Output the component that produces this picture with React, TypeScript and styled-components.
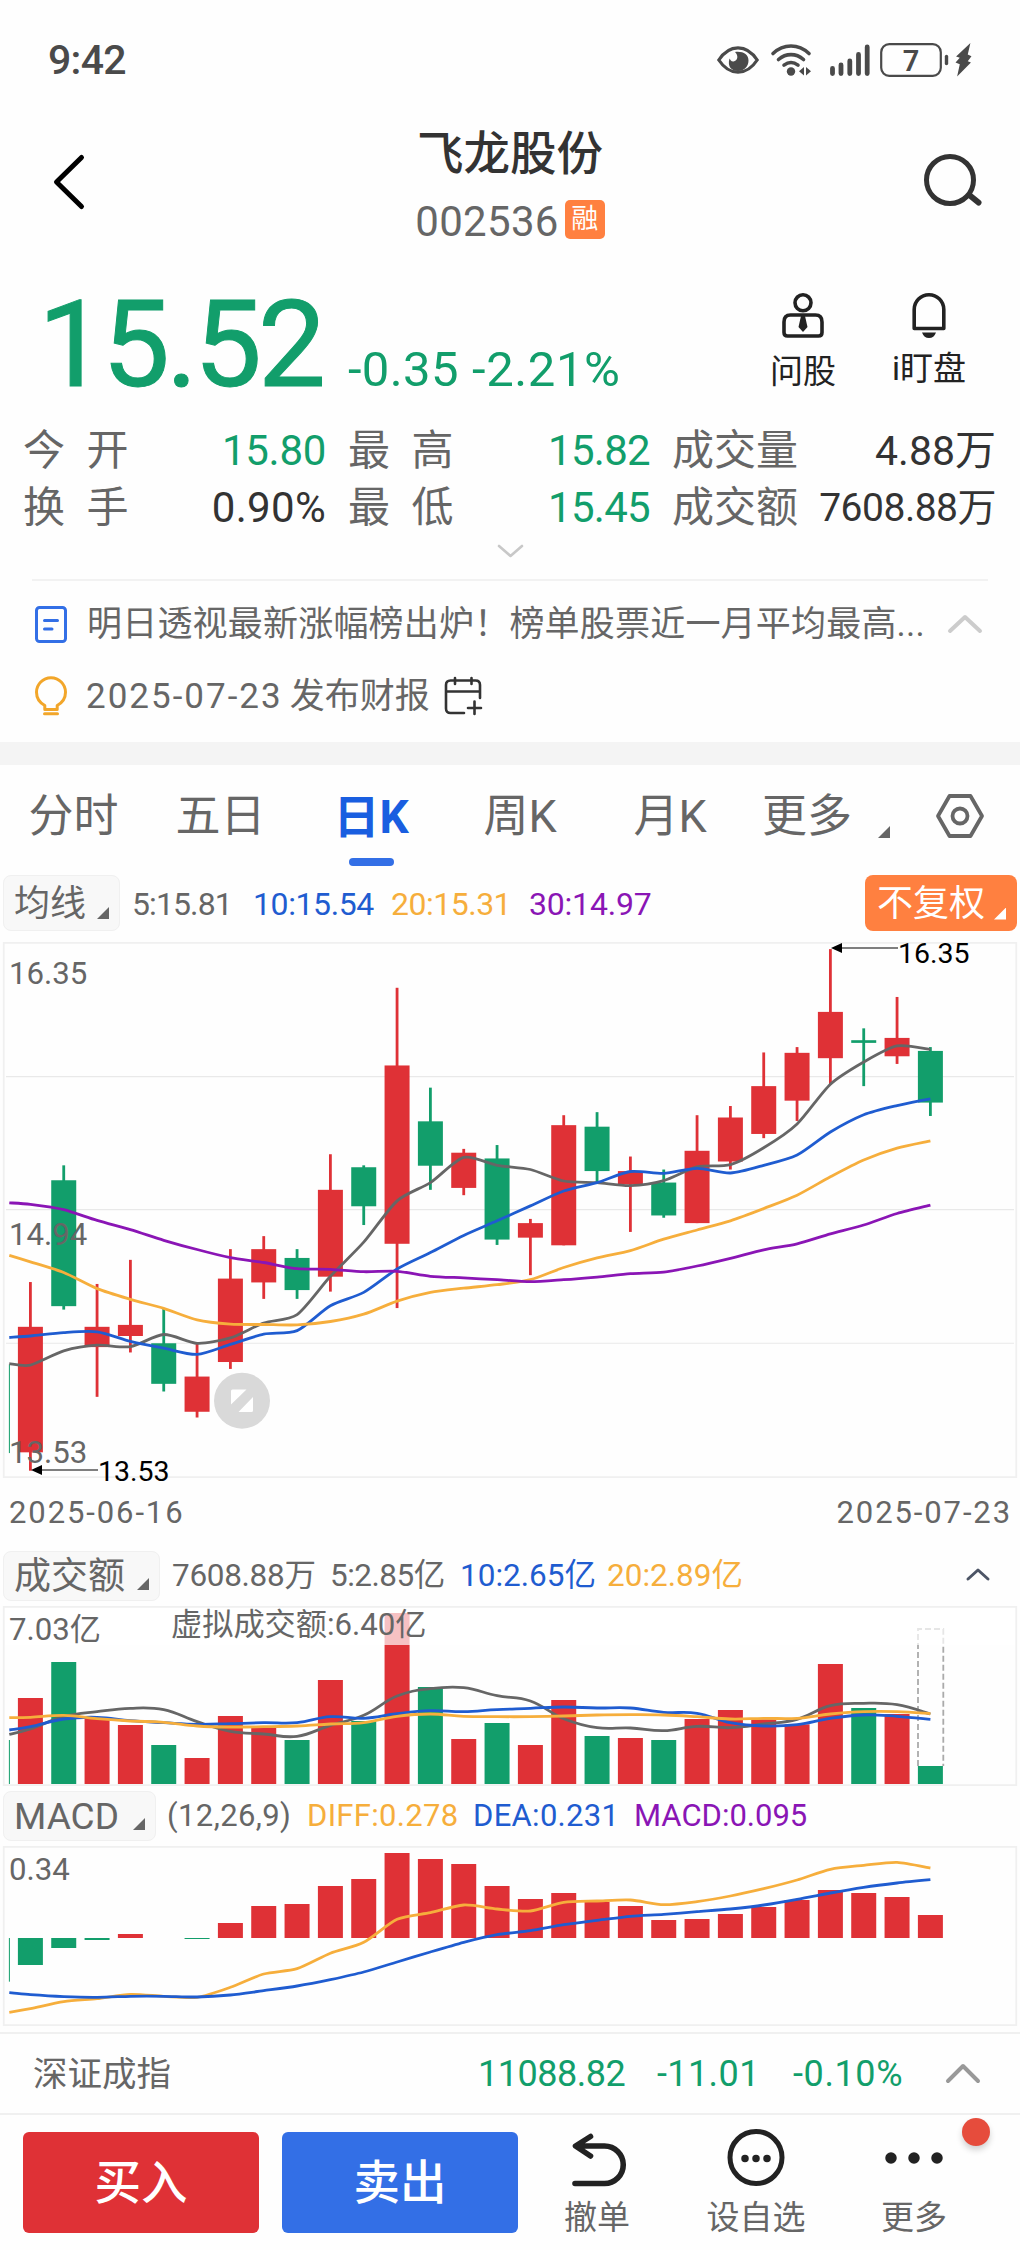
import React from 'react';
import styled, { createGlobalStyle } from 'styled-components';

const C = {
  red: '#df3136',
  green: '#129e6b',
  blue: '#1f5cd0',
  brand: '#336fe6',
  amber: '#f6ae3c',
  purple: '#8a15b5',
  gray: '#666666',
  ink: '#333333',
  orange: '#ff8040',
  line: '#f0f0f0',
};

const GlobalStyle = createGlobalStyle`
  * { box-sizing: border-box; }
  html, body { margin: 0; padding: 0; background: #fefefe; }
  body { font-family: Roboto, "Noto Sans CJK SC", sans-serif; color: ${C.gray}; }
  svg { display: block; flex: none; overflow: visible; }
`;

const Screen = styled.div`
  width: 1020px;
  height: 2250px;
  overflow: hidden;
  display: flex;
  flex-direction: column;
  background: #fefefe;
`;

const Label = styled.span<{ $size: number; $color?: string; $ls?: number; $weight?: number; $w?: number; $ml?: number; $ws?: number }>`
  font-size: ${(p) => p.$size}px;
  color: ${(p) => p.$color ?? C.gray};
  letter-spacing: ${(p) => p.$ls ?? 0}px;
  word-spacing: ${(p) => p.$ws ?? 0}px;
  font-weight: ${(p) => p.$weight ?? 400};
  width: ${(p) => (p.$w ? `${p.$w}px` : 'auto')};
  margin-left: ${(p) => p.$ml ?? 0}px;
  padding-top: 2px;
  line-height: 1.2;
  white-space: pre;
  flex: none;
`;

const StatusBar = styled.div`
  height: 120px;
  flex: none;
  display: flex;
  align-items: center;
  justify-content: space-between;
  padding: 0 48px 0 48px;
`;
const StatusIcons = styled.div`
  display: grid;
  grid-template-columns: 42px 40px 38px 69px 18px;
  column-gap: 12px;
  align-items: center;
  & > :nth-child(3) { margin-left: 7px; }
  & > :nth-child(4) { margin-left: 7px; }
  & > :nth-child(5) { margin-left: 1px; }
`;

const Header = styled.header`
  height: 123px;
  flex: none;
  display: grid;
  grid-template-columns: 120px 1fr 120px;
  align-items: center;
`;
const HeaderSide = styled.div<{ $left: number }>`
  padding-left: ${(p) => p.$left}px;
`;
const TitleBlock = styled.div`
  display: flex;
  flex-direction: column;
  align-items: center;
  gap: 17px;
  padding-top: 3px;
`;
const Title = styled.h1`
  margin: 0;
  font-size: 46.5px;
  line-height: 60px;
  font-weight: 500;
  color: ${C.ink};
`;
const CodeLine = styled.div`
  display: flex;
  height: 42px;
  align-items: center;
  gap: 6px;
`;
const MarginBadge = styled.span`
  width: 40px;
  height: 39px;
  margin-top: -4px;
  border-radius: 5px;
  background: ${C.orange};
  color: #fff;
  font-size: 27px;
  line-height: 38px;
  text-align: center;
`;

const QuoteRow = styled.section`
  height: 172px;
  flex: none;
  padding: 42px 51px 0 38px;
  display: flex;
  justify-content: space-between;
`;
const PriceGroup = styled.div`
  display: flex;
  align-items: baseline;
  height: 120px;
`;
const Price = styled.strong`
  font-size: 121px;
  line-height: 120px;
  letter-spacing: -4px;
  font-weight: 400;
  -webkit-text-stroke: 1px ${C.green};
  color: ${C.green};
`;
const QuickActions = styled.div`
  display: flex;
  gap: 46px;
  padding-top: 8px;
`;
const QuickAction = styled.div<{ $gap: number }>`
  width: 80px;
  display: flex;
  flex-direction: column;
  align-items: center;
  gap: ${(p) => p.$gap}px;
`;

const StatsGrid = styled.section`
  flex: none;
  display: grid;
  grid-template-columns: 303px 302px 324px;
  column-gap: 22px;
  grid-auto-rows: 57px;
  padding: 7px 0 0 23px;
`;
const Stat = styled.div`
  display: flex;
  align-items: center;
  justify-content: space-between;
`;
const Expand = styled.div`
  height: 43px;
  flex: none;
  display: flex;
  justify-content: center;
  padding-top: 9px;
`;
const NewsPanel = styled.section`
  flex: none;
  height: 163px;
  margin: 0 32px;
  padding-top: 7px;
  border-top: 2px solid #f2f2f2;
`;
const NewsRow = styled.div`
  height: 72px;
  padding-left: 3px;
  display: flex;
  align-items: center;
`;
const Band = styled.div`
  height: 23px;
  flex: none;
  background: #f4f4f4;
`;

const Tabs = styled.nav`
  height: 101px;
  flex: none;
  display: grid;
  grid-template-columns: 147px 147px 158px 136px 164px 151px 114px;
`;
const Tab = styled.div<{ $active?: boolean }>`
  display: flex;
  flex-direction: column;
  align-items: center;
  padding: 23px ${(p) => (p.$active ? 4 : 0)}px 0 0;
  font-size: ${(p) => (p.$active ? 46 : 45)}px;
  line-height: 58px;
  font-weight: ${(p) => (p.$active ? 700 : 400)};
  color: ${(p) => (p.$active ? '#195ee0' : C.gray)};
  &::after {
    content: '';
    display: ${(p) => (p.$active ? 'block' : 'none')};
    width: 45px;
    height: 8px;
    border-radius: 4px;
    margin-top: 12px;
    background: ${C.brand};
  }
`;
const MoreTab = styled.div`
  display: flex;
  align-items: flex-start;
  padding: 23px 13px 0 10px;
  justify-content: space-between;
  font-size: 45px;
  line-height: 58px;
`;
const SettingsTab = styled.div`
  display: flex;
  justify-content: center;
  padding-top: 29px;
`;

const InfoRow = styled.div<{ $h: number; $top: number }>`
  height: ${(p) => p.$h}px;
  flex: none;
  display: flex;
  align-items: flex-start;
  padding: ${(p) => p.$top}px 3px 0;
`;
const Chip = styled.div<{ $w: number; $h: number; $hot?: boolean }>`
  width: ${(p) => p.$w}px;
  height: ${(p) => p.$h}px;
  flex: none;
  display: flex;
  align-items: center;
  justify-content: space-between;
  padding: ${(p) => (p.$hot ? 2 : 1)}px ${(p) => (p.$hot ? 11 : 10)}px 0 ${(p) => (p.$hot ? 12 : 10)}px;
  border-radius: 8px;
  border: ${(p) => (p.$hot ? 'none' : `1px solid ${C.line}`)};
  background: ${(p) => (p.$hot ? C.orange : '#f8f8f8')};
`;
const CornerMark = styled.i<{ $color?: string; $drop?: number }>`
  width: 12px;
  height: 12px;
  margin-top: ${(p) => p.$drop ?? 19}px;
  background: ${(p) => p.$color ?? C.gray};
  clip-path: polygon(100% 0, 100% 100%, 0 100%);
`;
const Readings = styled.div<{ $h: number; $ml: number }>`
  display: flex;
  align-items: center;
  flex: 1;
  height: ${(p) => p.$h}px;
  padding-top: 1px;
  margin-left: ${(p) => p.$ml}px;
`;
const DateRow = styled.div`
  height: 67px;
  flex: none;
  display: flex;
  justify-content: space-between;
  align-items: center;
  padding: 1px 8px 0 9px;
`;

const IndexBar = styled.section`
  height: 83px;
  margin-top: 6px;
  flex: none;
  display: flex;
  align-items: center;
  padding: 0 40px 0 33px;
  border-top: 2px solid #f0f0f0;
  border-bottom: 2px solid #f0f0f0;
`;
const Spacer = styled.div`
  flex: 1;
`;

const BottomBar = styled.footer`
  flex: 1;
  display: flex;
  padding: 17px 0 0 23px;
`;
const TradeButton = styled.div<{ $bg: string }>`
  width: 236px;
  height: 101px;
  margin-right: 23px;
  border-radius: 6px;
  background: ${(p) => p.$bg};
  color: #fff;
  font-size: 46.5px;
  font-weight: 500;
  line-height: 103px;
  text-align: center;
`;
const Tool = styled.div<{ $w: number; $ml: number }>`
  position: relative;
  width: ${(p) => p.$w}px;
  margin-left: ${(p) => p.$ml}px;
  display: flex;
  flex-direction: column;
  align-items: center;
`;
const ToolIcon = styled.div<{ $shift?: number }>`
  height: 64px;
  padding-left: ${(p) => p.$shift ?? 0}px;
`;
const Dot = styled.i`
  position: absolute;
  top: -14px;
  right: -43px;
  width: 28px;
  height: 28px;
  border-radius: 50%;
  background: #e64c3c;
  box-shadow: 0 4px 6px rgba(0, 0, 0, 0.18);
`;

/* ---------- chart helpers ---------- */

const STEP = 33.333;
const FIRST = 30.4;
const BODY = 25;
const cx = (i: number) => FIRST + i * STEP;

/** Smooth path through a leading edge value followed by one value per bar. */
function linePath(values: number[], map: (v: number) => number, tension = 0.13) {
  const pts = values.map((v, i) => [i === 0 ? 9.3 : cx(i - 1), map(v)]);
  let d = `M${pts[0][0]} ${pts[0][1].toFixed(1)}`;
  for (let i = 0; i < pts.length - 1; i++) {
    const a = pts[Math.max(i - 1, 0)];
    const b = pts[i];
    const c = pts[i + 1];
    const e = pts[Math.min(i + 2, pts.length - 1)];
    d += `C${(b[0] + (c[0] - a[0]) * tension).toFixed(1)} ${(b[1] + (c[1] - a[1]) * tension).toFixed(1)} ${(c[0] - (e[0] - b[0]) * tension).toFixed(1)} ${(c[1] - (e[1] - b[1]) * tension).toFixed(1)} ${c[0].toFixed(1)} ${c[1].toFixed(1)}`;
  }
  return d;
}

const Curve = ({ d, color }: { d: string; color: string }) => (
  <path d={d} fill="none" stroke={color} strokeWidth={2.8} strokeLinejoin="round" />
);

const Frame = ({ h }: { h: number }) => (
  <rect x={3.75} y={0.9} width={1012.5} height={h - 1.8} fill="none" stroke={C.line} strokeWidth={1.8} />
);

type Side = 'r' | 'g';
/* direction, high, body top, body bottom, low */
const candles: [Side, number, number, number, number][] = [
  ['r', 920, 1037, 1365, 1413], ['g', 615, 654, 983, 992], ['r', 925, 1037, 1090, 1220],
  ['r', 862, 1032, 1061, 1104], ['g', 990, 1080, 1186, 1206], ['r', 1080, 1167, 1259, 1274],
  ['r', 834, 911, 1129, 1147], ['r', 800, 834, 921, 964], ['g', 834, 857, 941, 964],
  ['r', 586, 679, 906, 945], ['g', 615, 620, 722, 771], ['r', 151, 354, 820, 988],
  ['g', 412, 500, 616, 679], ['r', 572, 582, 674, 693], ['g', 562, 597, 809, 823],
  ['r', 755, 766, 804, 902], ['r', 484, 510, 824, 824], ['g', 476, 514, 630, 660],
  ['r', 592, 630, 665, 789], ['g', 626, 660, 746, 752], ['r', 484, 577, 766, 766],
  ['r', 460, 490, 605, 626], ['r', 320, 408, 533, 544], ['r', 306, 321, 446, 499],
  ['r', 50, 214, 335, 404], ['g', 257, 288, 295, 408], ['r', 175, 282, 330, 350],
  ['g', 306, 316, 451, 486],
];
const ma5 = [1133, 1137, 1100, 1085, 1089, 1057, 1080, 1066, 1027, 1005, 905, 816, 708, 660, 594, 615, 626, 656, 660, 668, 655, 619, 613, 569, 507, 403, 345, 303, 312];
const ma10 = [1065, 1061, 1052, 1050, 1075, 1093, 1109, 1083, 1056, 1047, 982, 947, 886, 843, 798, 760, 721, 682, 660, 631, 636, 623, 635, 615, 588, 528, 483, 459, 441];
const ma20 = [850, 867, 895, 937, 965, 989, 1019, 1030, 1031, 1032, 1023, 1004, 970, 947, 936, 927, 914, 882, 857, 838, 808, 784, 760, 728, 693, 645, 601, 570, 551];
const ma30 = [713, 717, 731, 759, 783, 811, 835, 856, 869, 885, 887, 893, 892, 905, 909, 914, 919, 914, 907, 898, 894, 878, 858, 836, 820, 794, 771, 741, 719];

const AxisText = styled.text`
  font-size: 31.2px;
  fill: ${C.gray};
`;
const MarkText = styled.text`
  font-size: 28.5px;
  fill: #000;
`;

function CandleChart() {
  const y = (v: number) => v / 2.6133 - 12;
  return (
    <svg width={1020} height={536}>
      <Frame h={536} />
      {[383, 731, 1080].map((v) => (
        <line key={v} x1={6} x2={1014} y1={y(v)} y2={y(v)} stroke="#e9e9e9" strokeWidth={1.2} />
      ))}
      <line x1={9.4} x2={9.4} y1={y(1135)} y2={y(1367)} stroke={C.green} strokeWidth={1} />
      {candles.map(([side, high, top, bottom, low], i) => (
        <g key={i} fill={side === 'r' ? C.red : C.green}>
          <rect x={cx(i) - 1.4} y={y(high)} width={2.8} height={y(low) - y(high)} />
          <rect x={cx(i) - BODY / 2} y={y(top)} width={BODY} height={y(bottom) - y(top)} />
        </g>
      ))}
      <Curve d={linePath(ma5, y)} color={C.gray} />
      <Curve d={linePath(ma10, y)} color={C.blue} />
      <Curve d={linePath(ma20, y)} color={C.amber} />
      <Curve d={linePath(ma30, y)} color={C.purple} />
      <AxisText x={9} y={42}>16.35</AxisText>
      <AxisText x={9} y={303}>14.94</AxisText>
      <AxisText x={9} y={521}>13.53</AxisText>
      <g stroke="#555" strokeWidth={1.5}>
        <line x1={40} x2={98} y1={528} y2={528} />
        <line x1={840} x2={898} y1={6} y2={6} />
      </g>
      <path d="M31 528l11-5v10zM831 6l11-5v10z" fill="#000" />
      <MarkText x={98} y={538.5}>13.53</MarkText>
      <MarkText x={898} y={21}>16.35</MarkText>
      <circle cx={242} cy={458.7} r={28} fill="#d9d9d9" />
      <path d="M231 449q0-1.500 1.500-1.500h14L231 462.500zM253 455v13.500q0 1.500-1.500 1.500H238.500z" fill="#fff" />
    </svg>
  );
}

const volumes: [Side, number][] = [
  ['r', 504], ['g', 396], ['r', 562], ['r', 585], ['g', 645], ['r', 684], ['r', 558], ['r', 592],
  ['g', 630], ['r', 450], ['g', 573], ['r', 249], ['g', 471], ['r', 627], ['g', 579], ['r', 645],
  ['r', 510], ['g', 618], ['r', 624], ['g', 630], ['r', 567], ['r', 540], ['r', 568], ['r', 583],
  ['r', 402], ['g', 534], ['r', 552], ['g', 708],
];
const vol5 = [613, 597, 560, 545, 535, 539, 575, 604, 612, 619, 586, 556, 498, 476, 473, 497, 513, 566, 593, 594, 602, 589, 593, 582, 568, 527, 520, 524, 552];
const vol10 = [600, 590, 567, 562, 572, 578, 583, 581, 578, 578, 560, 565, 551, 542, 545, 539, 535, 531, 534, 534, 547, 550, 578, 588, 584, 565, 555, 559, 568];
const vol20 = [563, 562, 556, 566, 573, 577, 588, 591, 590, 588, 582, 578, 559, 552, 559, 560, 560, 558, 555, 554, 555, 560, 567, 565, 565, 552, 545, 545, 551];

function VolumeChart() {
  const y = (v: number) => v / 3 - 76;
  return (
    <svg width={1020} height={180}>
      <line x1={9.4} x2={9.4} y1={y(630)} y2={y(762)} stroke={C.green} strokeWidth={1} />
      {volumes.map(([side, top], i) => (
        <rect key={i} x={cx(i) - BODY / 2} y={y(top)} width={BODY} height={y(762) - y(top)} fill={side === 'r' ? C.red : C.green} />
      ))}
      <path d={`M918 ${y(708)}V${y(297)}h25.300V${y(708)}`} fill="none" stroke="#aaa" strokeWidth={1.8} strokeDasharray="6 3" />
      <rect x={5} y={2} width={1010} height={37} fill="#fff" fillOpacity={0.7} />
      <Frame h={180} />
      <Curve d={linePath(vol5, y, 0.2)} color={C.gray} />
      <Curve d={linePath(vol10, y, 0.2)} color={C.blue} />
      <Curve d={linePath(vol20, y, 0.2)} color={C.amber} />
      <AxisText x={9} y={34}>7.03亿</AxisText>
      <AxisText x={171} y={28.5}>虚拟成交额:6.40亿</AxisText>
    </svg>
  );
}

const macdBars = [525, 474, 450, 432, 444, 447, 399, 348, 342, 288, 267, 189, 207, 222, 288, 327, 309, 336, 348, 390, 387, 372, 351, 330, 300, 309, 321, 375];
const diff = [667, 656, 635, 626, 613, 619, 622, 592, 552, 536, 490, 457, 388, 368, 345, 357, 363, 337, 333, 330, 344, 335, 318, 296, 270, 238, 226, 217, 234];
const dea = [608, 614, 620, 622, 619, 619, 621, 615, 602, 588, 569, 546, 516, 486, 457, 434, 422, 404, 391, 379, 373, 365, 357, 345, 328, 309, 292, 279, 269];

function MacdChart() {
  const y = (v: number) => v / 3 - 56;
  const zero = 444;
  return (
    <svg width={1020} height={180}>
      <Frame h={180} />
      <line x1={9.4} x2={9.4} y1={y(zero)} y2={y(575)} stroke={C.green} strokeWidth={1} />
      {macdBars.map((v, i) => (
        <rect key={i} x={cx(i) - BODY / 2} y={y(Math.min(v, zero))} width={BODY} height={Math.abs(v - zero) / 3} fill={v < zero ? C.red : C.green} />
      ))}
      <Curve d={linePath(diff, y)} color={C.amber} />
      <Curve d={linePath(dea, y)} color={C.blue} />
      <AxisText x={9} y={34}>0.34</AxisText>
    </svg>
  );
}

/* ---------- icons ---------- */

const Chevron = ({ w, h, color, sw, up }: { w: number; h: number; color: string; sw: number; up?: boolean }) => (
  <svg width={w} height={h}>
    <path d={up ? `M2 ${h - 2}L${w / 2} 2L${w - 2} ${h - 2}` : `M1 1L${w / 2} ${h - 1}L${w - 1} 1`} fill="none" stroke={color} strokeWidth={sw} strokeLinecap="round" strokeLinejoin="round" />
  </svg>
);

const EyeIcon = () => (
  <svg width={42} height={28} viewBox="0 0 42 28">
    <path d="M1.800 14C7 6 13.500 1.800 21 1.800S35 6 40.200 14C35 22 28.500 26.200 21 26.200S7 22 1.800 14z" fill="none" stroke="#4a4a4a" strokeWidth={3.200} />
    <path d="M18 6c4 4 2.500 9-1.500 9.500-2.500.2-3-1.500-4-3C10 21 15 25 21 25c6 0 10.500-4.500 10.500-10.500S26 5 18 6z" fill="#4a4a4a" />
  </svg>
);
const WifiIcon = () => (
  <svg width={40} height={32} viewBox="0 0 40 32">
    <g fill="none" stroke="#4a4a4a" strokeWidth={3.600} strokeLinecap="round">
      <path d="M2 9.500C12.500-.5 27.500-.5 38 9.500" />
      <path d="M7.500 15.500c7.500-6.500 17.500-6.500 25 0" />
      <path d="M13 21.200c4.500-3.500 9.500-3.500 14 0" />
    </g>
    <circle cx={20} cy={27.500} r={4.200} fill="#4a4a4a" />
    <path d="M33 23v8.500l-5-4.200zM35 23v8.500l5-4.200z" fill="#4a4a4a" />
  </svg>
);
const SignalIcon = () => (
  <svg width={38} height={32} viewBox="0 0 38 32">
    <path d="M2.500 24.500v5M11 21v8.500M19.800 17v12.500M28.500 10.500v19M37.200 3v26.500" stroke="#4a4a4a" strokeWidth={4.800} strokeLinecap="round" />
  </svg>
);
const BatteryIcon = () => (
  <svg width={69} height={34} viewBox="0 0 69 34">
    <rect x={1.200} y={1.200} width={59.600} height={31.600} rx={8} fill="none" stroke="#4a4a4a" strokeWidth={2.200} />
    <path d="M66.500 13.500v7" stroke="#4a4a4a" strokeWidth={3.400} strokeLinecap="round" />
    <text x={31} y={27.500} fontSize={29} fontWeight={600} textAnchor="middle" fill="#4a4a4a">7</text>
  </svg>
);
const BoltIcon = () => (
  <svg width={17} height={34} viewBox="0 0 16 34" preserveAspectRatio="none">
    <path d="M14.500 0L1 13.500l3.500 1.200L.5 19.500l4 1.800L2 33.500l13-14-3-1.300 3.500-5-3.500-1.700z" fill="#4a4a4a" />
  </svg>
);
const AdvisorIcon = () => (
  <svg width={44} height={45} viewBox="0 0 44 45" fill="none" stroke="#222" strokeWidth={3.600}>
    <circle cx={22} cy={9.800} r={8} />
    <path d="M9.500 22h25q6.500 0 6.500 7v10.500q0 3.500-3.500 3.500h-31Q3 43 3 39.500V29q0-7 6.500-7z" strokeLinejoin="round" />
    <path d="M20 23h4l2.500 11-4.500 5-4.500-5z" fill="#222" stroke="none" />
  </svg>
);
const BellIcon = () => (
  <svg width={36} height={45} viewBox="0 0 36 45">
    <path d="M3.200 35.500V16.500a14.800 14.800 0 0 1 29.600 0v19z" fill="none" stroke="#222" strokeWidth={3.600} strokeLinejoin="round" />
    <path d="M11 39.500h14q-2 5.500-7 5.500t-7-5.500z" fill="#222" />
  </svg>
);
const DocIcon = () => (
  <svg width={32} height={37} viewBox="0 0 32 37" fill="none" stroke={C.brand} strokeWidth={3} strokeLinecap="round">
    <rect x={1.500} y={1.500} width={29} height={34} rx={3} />
    <path d="M9.500 14.500h13M9.500 23h7.500" />
  </svg>
);
const BulbIcon = () => (
  <svg width={32} height={40} viewBox="0 0 32 40" fill="none" stroke="#f2a62a" strokeWidth={3}>
    <path d="M9.800 33.500V29.500C4.500 26.500 1.500 22 1.500 16.200a14.500 14.500 0 0 1 29 0c0 5.800-3 10.300-8.300 13.300v4z" strokeLinejoin="round" />
    <path d="M9.500 37.800h13" strokeLinecap="round" />
  </svg>
);
const CalendarIcon = () => (
  <svg width={38} height={38} viewBox="0 0 38 38" fill="none" stroke="#333" strokeWidth={2.600} strokeLinecap="round">
    <path d="M20 36H6.500Q2 36 2 31.500V8q0-4.500 4.500-4.500h25Q36 3.500 36 8v13M2 14.500h34M11 1v6M27.500 1v6M30.500 24.500v12.500M24 31h13" />
  </svg>
);
const HexIcon = () => (
  <svg width={48} height={44} viewBox="0 0 48 44" fill="none" stroke={C.gray} strokeWidth={3.800}>
    <path d="M13.500 2h21L46 22 34.500 42h-21L2 22z" strokeLinejoin="round" />
    <circle cx={24} cy={22} r={7.500} />
  </svg>
);
const UndoIcon = () => (
  <svg width={56} height={54} viewBox="0 0 56 54" fill="none" stroke="#222" strokeWidth={5.600} strokeLinecap="round" strokeLinejoin="round">
    <path d="M19.500 4.500L4.500 14l15 10M6 14h27.500a18.500 18.500 0 0 1 0 37.500H4" />
  </svg>
);

const App = () => (
  <Screen>
    <GlobalStyle />
    <StatusBar>
      <Label $size={41} $color="#4a4a4a" $ls={-0.7} $weight={500}>9:42</Label>
      <StatusIcons>
        <EyeIcon />
        <WifiIcon />
        <SignalIcon />
        <BatteryIcon />
        <BoltIcon />
      </StatusIcons>
    </StatusBar>

    <Header>
      <HeaderSide $left={52}>
        <svg width={34} height={54} viewBox="0 0 34 54">
          <path d="M29.500 2.500L4.500 27l25 24.500" fill="none" stroke="#000" strokeWidth={5} strokeLinecap="round" strokeLinejoin="round" />
        </svg>
      </HeaderSide>
      <TitleBlock>
        <Title>飞龙股份</Title>
        <CodeLine>
          <Label $size={42} $ls={0.3}>002536</Label>
          <MarginBadge>融</MarginBadge>
        </CodeLine>
      </TitleBlock>
      <HeaderSide $left={24}>
        <svg width={60} height={56} viewBox="0 0 60 56">
          <circle cx={26} cy={26} r={23.500} fill="none" stroke="#333" strokeWidth={5} />
          <path d="M46.500 42l8 6.500" stroke="#333" strokeWidth={6} strokeLinecap="round" />
        </svg>
      </HeaderSide>
    </Header>

    <QuoteRow>
      <PriceGroup>
        <Price>15.52</Price>
        <Label $size={49} $color={C.green} $ls={0.4} $ml={26}>-0.35</Label>
        <Label $size={49} $color={C.green} $ls={0.6} $ml={13}>-2.21%</Label>
      </PriceGroup>
      <QuickActions>
        <QuickAction $gap={12}>
          <AdvisorIcon />
          <Label $size={33} $color="#222">问股</Label>
        </QuickAction>
        <QuickAction $gap={9}>
          <BellIcon />
          <Label $size={33} $color="#222">i盯盘</Label>
        </QuickAction>
      </QuickActions>
    </QuoteRow>

    <StatsGrid>
      <Stat>
        <Label $size={42} $ws={11}>今 开</Label>
        <Label $size={42} $color={C.green} $ls={-0.3}>15.80</Label>
      </Stat>
      <Stat>
        <Label $size={42} $ws={11}>最 高</Label>
        <Label $size={42} $color={C.green} $ls={-0.7}>15.82</Label>
      </Stat>
      <Stat>
        <Label $size={42}>成交量</Label>
        <Label $size={41} $color={C.ink}>4.88万</Label>
      </Stat>
      <Stat>
        <Label $size={42} $ws={11}>换 手</Label>
        <Label $size={42} $color={C.ink} $ls={0.3}>0.90%</Label>
      </Stat>
      <Stat>
        <Label $size={42} $ws={11}>最 低</Label>
        <Label $size={42} $color={C.green} $ls={-0.7}>15.45</Label>
      </Stat>
      <Stat>
        <Label $size={42}>成交额</Label>
        <Label $size={39} $color={C.ink} $ls={-0.5}>7608.88万</Label>
      </Stat>
    </StatsGrid>
    <Expand>
      <Chevron w={25} h={12} color="#c8c8c8" sw={2.6} />
    </Expand>

    <NewsPanel>
      <NewsRow>
        <DocIcon />
        <Label $size={35} $ml={20} $ls={0.2}>明日透视最新涨幅榜出炉！榜单股票近一月平均最高...</Label>
        <Spacer />
        <Chevron w={34} h={18} color="#cccccc" sw={4} up />
        <Label $size={10} $w={6}> </Label>
      </NewsRow>
      <NewsRow>
        <BulbIcon />
        <Label $size={35} $ml={19} $ls={2}>2025-07-23</Label>
        <Label $size={35} $ml={7}>发布财报</Label>
        <Label $size={10} $w={14}> </Label>
        <CalendarIcon />
      </NewsRow>
    </NewsPanel>
    <Band />

    <Tabs>
      <Tab>分时</Tab>
      <Tab>五日</Tab>
      <Tab $active>日K</Tab>
      <Tab>周K</Tab>
      <Tab>月K</Tab>
      <MoreTab>更多<CornerMark $drop={38} /></MoreTab>
      <SettingsTab><HexIcon /></SettingsTab>
    </Tabs>

    <InfoRow $h={76} $top={9}>
      <Chip $w={117} $h={56}>
        <Label $size={36}>均线</Label>
        <CornerMark />
      </Chip>
      <Readings $h={56} $ml={12}>
        <Label $size={32} $ls={-0.9} $w={121}>5:15.81</Label>
        <Label $size={32} $ls={-0.4} $w={138} $color={C.blue}>10:15.54</Label>
        <Label $size={32} $ls={-0.5} $w={138} $color={C.amber}>20:15.31</Label>
        <Label $size={32} $ls={-0.2} $color={C.purple}>30:14.97</Label>
      </Readings>
      <Chip $w={152} $h={56} $hot>
        <Label $size={36} $color="#fff">不复权</Label>
        <CornerMark $color="#fff" />
      </Chip>
    </InfoRow>
    <CandleChart />
    <DateRow>
      <Label $size={31} $ls={1.9}>2025-06-16</Label>
      <Label $size={31} $ls={1.9}>2025-07-23</Label>
    </DateRow>

    <InfoRow $h={61} $top={6}>
      <Chip $w={157} $h={50}>
        <Label $size={37}>成交额</Label>
        <CornerMark $drop={15} />
      </Chip>
      <Readings $h={46} $ml={12}>
        <Label $size={31.5} $ls={-0.3} $w={158}>7608.88万</Label>
        <Label $size={31.5} $ls={-0.5} $w={130}>5:2.85亿</Label>
        <Label $size={31.5} $w={147} $color={C.blue}>10:2.65亿</Label>
        <Label $size={31.5} $color={C.amber}>20:2.89亿</Label>
        <Spacer />
        <Chevron w={24} h={13} color="#4d5566" sw={3} up />
        <Label $size={10} $w={27}> </Label>
      </Readings>
    </InfoRow>
    <VolumeChart />

    <InfoRow $h={60} $top={5}>
      <Chip $w={153} $h={50}>
        <Label $size={37}>MACD</Label>
        <CornerMark $drop={15} />
      </Chip>
      <Readings $h={46} $ml={11}>
        <Label $size={31} $ls={0.4} $w={140}>(12,26,9)</Label>
        <Label $size={31} $ls={0.3} $w={166} $color={C.amber}>DIFF:0.278</Label>
        <Label $size={31} $ls={0.3} $w={161} $color={C.blue}>DEA:0.231</Label>
        <Label $size={31} $color={C.purple}>MACD:0.095</Label>
      </Readings>
    </InfoRow>
    <MacdChart />

    <IndexBar>
      <Label $size={34.5}>深证成指</Label>
      <Spacer />
      <Label $size={36} $color={C.green} $ls={-0.5} $w={179}>11088.82</Label>
      <Label $size={36} $color={C.green} $ls={0.4} $w={136}>-11.01</Label>
      <Label $size={36} $color={C.green} $ls={0.6} $w={153}>-0.10%</Label>
      <Chevron w={34} h={19} color="#999999" sw={4} up />
    </IndexBar>

    <BottomBar>
      <TradeButton $bg={C.red}>买入</TradeButton>
      <TradeButton $bg={C.brand}>卖出</TradeButton>
      <Tool $w={66} $ml={23}>
        <ToolIcon $shift={3}><UndoIcon /></ToolIcon>
        <Label $size={33}>撤单</Label>
      </Tool>
      <Tool $w={100} $ml={76}>
        <ToolIcon>
          <svg width={58} height={58} viewBox="0 0 58 58">
            <circle cx={29} cy={25.500} r={26} fill="none" stroke="#222" strokeWidth={5} />
            <path d="M18 26.500h0M29 26.500h0M40 26.500h0" stroke="#222" strokeWidth={7.500} strokeLinecap="round" />
          </svg>
        </ToolIcon>
        <Label $size={33}>设自选</Label>
      </Tool>
      <Tool $w={66} $ml={75}>
        <ToolIcon>
          <svg width={58} height={58} viewBox="0 0 58 58">
            <path d="M6 26h0M29 26h0M52 26h0" stroke="#222" strokeWidth={11.500} strokeLinecap="round" />
          </svg>
        </ToolIcon>
        <Label $size={33}>更多</Label>
        <Dot />
      </Tool>
    </BottomBar>
  </Screen>
);

export default App;
